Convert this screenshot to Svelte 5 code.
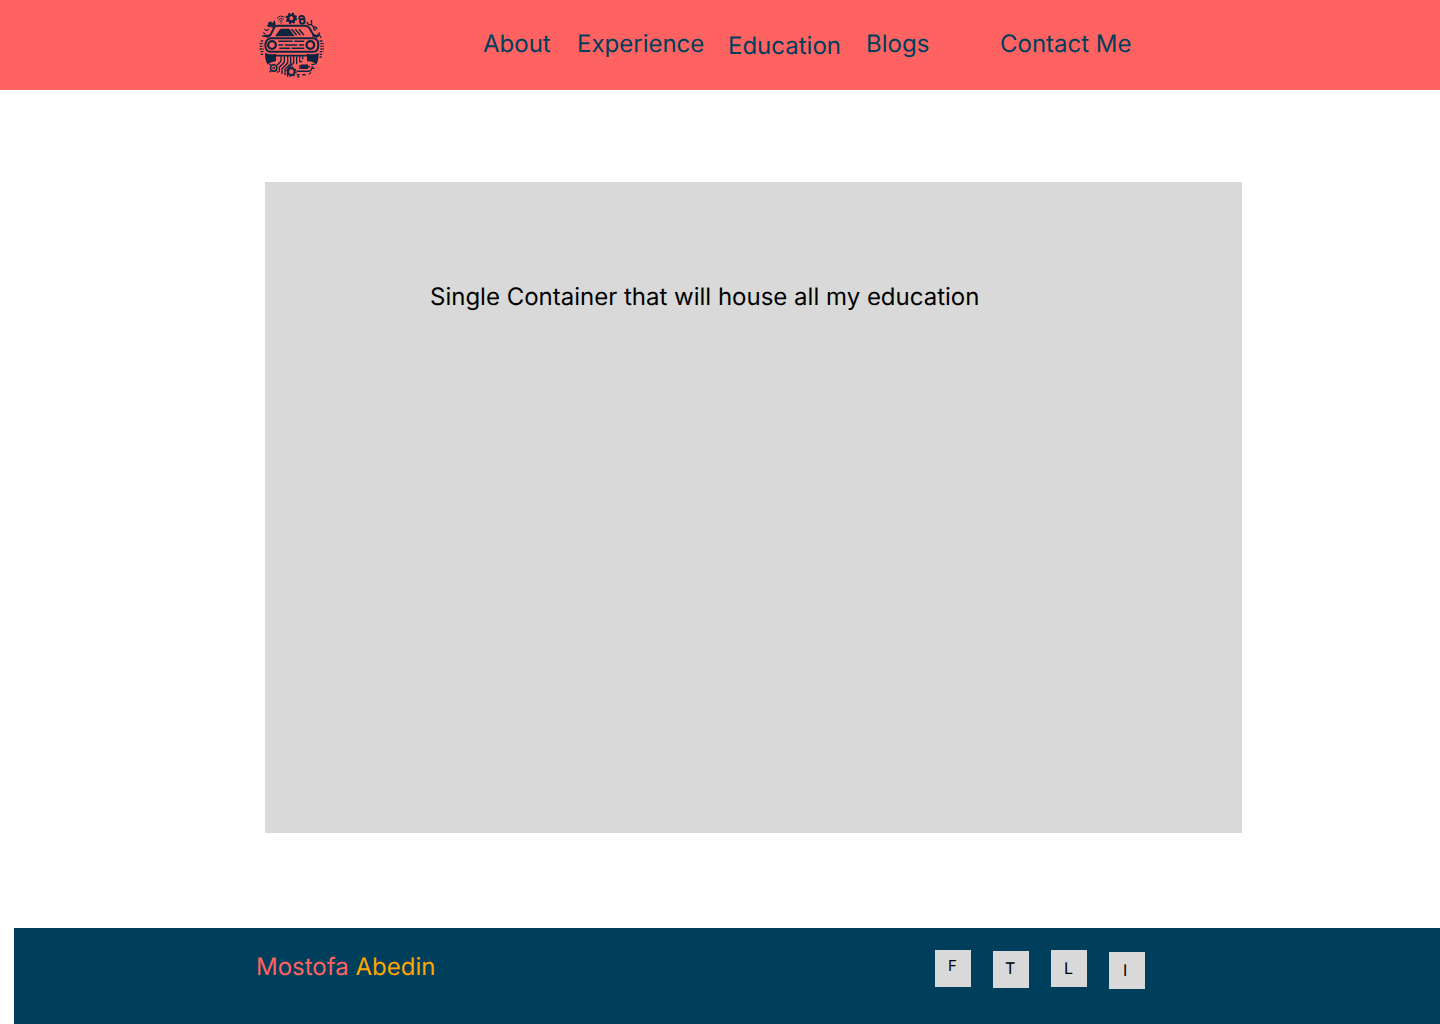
<script>
  const links = [
    { label: 'About' },
    { label: 'Experience' },
    { label: 'Education', current: true },
    { label: 'Blogs' },
    { label: 'Contact Me' }
  ];
  const socials = ['F', 'T', 'L', 'I'];
</script>

<div class="page">
  <header>
    <svg class="logo" viewBox="0 0 228 228" fill="none" stroke="#0c2440" stroke-width="4.5" aria-label="Car and gears logo">
      <!-- roof and windscreen -->
      <path d="M38 88 L50 80 L61 58 Q64 53 72 53 H154 Q161 53 166 60 L178 80 L190 88" stroke-width="6" />
      <path d="M63 85 L77 65 Q80 62 84 62 H106 L122 85Z" fill="#0c2440" stroke="none" />
      <path d="M113 64 L128 82 M124 64 L139 82 M135 64 L150 82" stroke-width="4.5" />
      <path d="M30 83 H49 M175 83 H195" stroke-width="6" />
      <!-- body and grille -->
      <path d="M48 91 H180 Q193 94 193 110 Q193 131 179 131 H47 Q34 129 34 110 Q35 95 48 91Z" stroke-width="6" />
      <circle cx="54" cy="111" r="11.5" stroke-width="7" />
      <circle cx="169" cy="111" r="11.5" stroke-width="7" />
      <path d="M73 100 H116 M121 100 H151 M73 111 H88 M93 111 H130 M135 111 H150 M76 121 H108 M113 121 H151" />
      <!-- bumper and wheels -->
      <path d="M33 135 Q52 142 66 137 V160 Q49 162 41 170 Q33 158 33 135Z M194 135 Q178 142 159 137 V160 Q177 159 187 170 Q194 158 194 135Z" fill="#0c2440" stroke="none" />
      <path d="M62 143 H164" stroke-width="5" />
      <!-- circuit traces -->
      <path d="M81 145 V160 L70 171 M91 145 V163 L76 178 V192 M101 145 V165 L84 182 V198 M110 145 V167 L93 184 V202 M119 145 V164 L101 184 V206 M128 145 V169 M137 145 V161 H145 M146 145 V154" stroke-width="4" />
      <circle cx="59" cy="180" r="9.5" />
      <circle cx="59" cy="180" r="3" stroke-width="3" />
      <path d="M50 171 L46 168 M69 172 L72 169 M50 190 L47 193 M69 190 L72 194" />
      <circle cx="112" cy="191" r="10" stroke-width="6" />
      <circle cx="112" cy="191" r="14" stroke-width="4" stroke-dasharray="5 6" />
      <path d="M128 190 H164 Q174 189 175 174 M128 200 H137 M145 200 H155 M130 206 H136" />
      <path d="M143 172 H160 V181 H143Z M135 174 H141 M135 180 H141 M160 176 H168" fill="#0c2440" />
      <path d="M172 169 H183 M174 181 H182 M165 199 L171 193" stroke-width="3.5" />
      <!-- top ornaments -->
      <circle cx="112" cy="31" r="10" stroke-width="8" />
      <circle cx="112" cy="31" r="15" stroke-width="5" stroke-dasharray="6 5.8" />
      <path d="M69 30 Q79 20 91 27 M73 36 Q80 28 89 34 M77 41 Q81 36 86 40" stroke-width="3" />
      <circle cx="81" cy="45" r="2" fill="#0c2440" stroke="none" />
      <path d="M42 44 L51 40 L55 46 L62 36 L65 50 L56 59 L43 54Z" fill="#0c2440" stroke="none" />
      <path d="M136 34 Q134 24 143 24 Q152 24 151 33 L148 35" stroke-width="5.5" />
      <circle cx="145" cy="40" r="7" stroke-width="6" />
      <path d="M159 42 Q162 53 171 49 L179 57 M172 36 L173 47 M179 57 Q178 65 185 67 M181 57 Q189 57 188 64" />
      <path d="M39 52 L47 57 M31 64 L38 68 L44 63 M27 74 L34 77 M24 83 L31 85" stroke-width="3.5" />
      <path d="M190 78 Q198 80 202 90 M194 73 L198 79" stroke-width="3.5" />
      <path d="M20 99 H29 M17 107 H28 M17 115 H28 M17 123 H29 M20 131 H30 M20 139 H29 M197 99 H207 M199 107 H210 M199 115 H210 M199 123 H210 M197 131 H208 M197 139 H206 M197 147 H203" stroke-width="4" stroke-dasharray="7 1.5" />
    </svg>
    <nav>
      {#each links as link}
        <a class:current={link.current}>{link.label}</a>
      {/each}
    </nav>
  </header>

  <main>
    <p>Single Container that will house all my education</p>
  </main>

  <footer>
    <div class="name"><span>Mostofa</span> Abedin</div>
    <div class="socials">
      {#each socials as letter}
        <a class="social">{letter}</a>
      {/each}
    </div>
  </footer>
</div>

<style>
  :global(body) {
    background: #fff;
  }
  .page {
    display: flex;
    flex-direction: column;
    height: 1024px;
    font: 24px/29px Inter, sans-serif;
    font-optical-sizing: none;
    text-rendering: geometricPrecision;
    color: #000;
  }
  header {
    display: flex;
    height: 90px;
    box-sizing: border-box;
    padding: 8px 0 0 254px;
    background: #ff6361;
  }
  .logo {
    width: 76px;
    height: 76px;
    flex: none;
  }
  nav {
    display: grid;
    grid-template-columns: 94px 151px 138px 134px 140px;
    align-items: start;
    margin-left: 153px;
    padding-top: 21px;
    color: #003f5c;
    white-space: nowrap;
  }
  .current {
    margin-top: 2px;
  }
  main {
    width: 977px;
    height: 651px;
    box-sizing: border-box;
    margin: 92px 0 95px 265px;
    padding: 100px 165px;
    background: #d9d9d9;
  }
  p {
    margin: 0;
    white-space: nowrap;
  }
  footer {
    display: flex;
    justify-content: space-between;
    height: 96px;
    box-sizing: border-box;
    margin-left: 14px;
    padding: 22px 295px 0 242px;
    background: #003f5c;
  }
  .name {
    padding-top: 2px;
    color: #ffa600;
  }
  .name span {
    color: #ff6361;
  }
  .socials {
    display: flex;
    align-items: flex-start;
    gap: 22px;
  }
  .social {
    width: 36px;
    height: 37px;
    box-sizing: border-box;
    padding: 9px 0 0 13px;
    background: #d9d9d9;
    font-size: 16px;
    line-height: 19px;
  }
  .social:nth-child(1) {
    padding-top: 6px;
    font-size: 15px;
  }
  .social:nth-child(2) {
    margin-top: 1px;
    padding: 8px 0 0 12px;
  }
  .social:nth-child(4) {
    margin-top: 2px;
    padding-left: 14px;
  }
</style>
